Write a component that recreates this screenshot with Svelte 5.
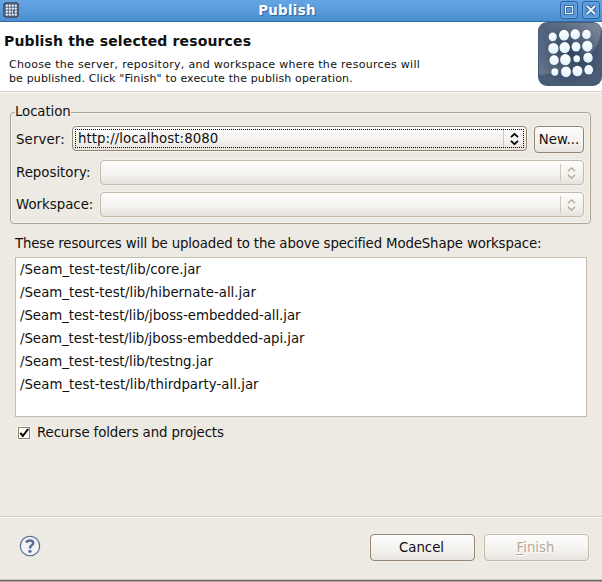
<script>
  const resources = [
    { name: 'core.jar', tracking: 0.02 },
    { name: 'hibernate-all.jar', tracking: 0 },
    { name: 'jboss-embedded-all.jar', tracking: -0.04 },
    { name: 'jboss-embedded-api.jar', tracking: -0.06 },
    { name: 'testng.jar', tracking: -0.03 },
    { name: 'thirdparty-all.jar', tracking: 0.02 }
  ];

  const dots = [
    [14.7, 14.8, 4.1], [26, 13.2, 5], [37.2, 12.4, 4.7], [48.5, 12.4, 4.3],
    [15.4, 26.4, 5.1], [26.7, 25.6, 5.2], [38, 24.8, 4.4], [49.3, 24.2, 5.1],
    [16.1, 38.2, 4.6], [27.4, 37.7, 5.3], [38.7, 36.8, 3.3], [50, 35.8, 4.7],
    [16.8, 50, 3.5], [28, 49.8, 5], [39.4, 49, 5], [50.7, 47.8, 4.4]
  ];
  const rows = [
    { label: 'Server:', value: 'http://localhost:8080', active: true },
    { label: 'Repository:', value: '', active: false },
    { label: 'Workspace:', value: '', active: false }
  ];
  let recurse = $state(true);
</script>

<main>
  <header class="titlebar">
    <svg class="appicon" width="16" height="16" viewBox="0 0 16 16">
      <rect width="16" height="16" rx="1.5" fill="#485a77" />
      {#each [4, 7, 10, 13] as y}
        {#each [4, 7, 10, 13] as x}
          <rect x={x - 1.4} y={y - 1.6} width={x === 10 && y === 10 ? 1.5 : 2.3} height="2.3" rx=".6" fill="#e3f1f7" />
        {/each}
      {/each}
      <path d="M0 .5h1M15 .5h1M0 15.5h1M15 15.5h1" stroke="#b9d5ef" />
    </svg>
    <h1>Publish</h1>
    <div class="controls">
      <button aria-label="Maximize">
        <svg width="18" height="18" viewBox="0 0 18 18"><rect x="5.5" y="5.5" width="7" height="7" fill="none" stroke="#2c6199" stroke-width="3" /><rect x="5.5" y="5.5" width="7" height="7" fill="none" stroke="#e6f0fa" stroke-width="1.2" /></svg>
      </button>
      <button aria-label="Close">
        <svg width="18" height="18" viewBox="0 0 18 18"><path d="M5 5l8 8M13 5l-8 8" stroke="#2c6199" stroke-width="4" /><path d="M5 5l8 8M13 5l-8 8" stroke="#eef4fb" stroke-width="2" /></svg>
      </button>
    </div>
  </header>

  <section class="banner">
    <div class="copy">
      <h2>Publish the selected resources</h2>
      <p>Choose the server, repository, and workspace where the resources will<br /><span>be published. Click "Finish" to execute the publish operation.</span></p>
    </div>
    <svg class="logo" width="64" height="64" viewBox="0 0 64 64">
      <defs>
        <radialGradient id="core"><stop offset="0" stop-color="#263b56" /><stop offset="1" stop-color="#4a5b76" /></radialGradient>
        <linearGradient id="gloss" x1="0" y1="1" x2="1" y2="0"><stop offset="0" stop-color="#fff" stop-opacity=".16" /><stop offset=".5" stop-color="#fff" stop-opacity=".04" /><stop offset="1" stop-color="#fff" stop-opacity=".28" /></linearGradient>
        <linearGradient id="dot" x2="0" y2="1"><stop offset="0" stop-color="#fff" /><stop offset="1" stop-color="#e1f2fa" /></linearGradient>
      </defs>
      <rect width="64" height="64" rx="9" fill="url(#core)" />
      <path d="M1 53V9Q1 1 9 1H55Q63 1 63 8Q60 46 1 53Z" fill="url(#gloss)" />
      {#each dots as [x, y, r]}
        <ellipse cx={x} cy={y} rx={r} ry={r * 1.07} fill="url(#dot)" />
      {/each}
    </svg>
  </section>

  <section class="content">
    <fieldset>
      <legend>Location</legend>
      {#each rows as row}
        <div class="row" class:active={row.active}>
          <span class="label">{row.label}</span>
          <div class="combo">
            <div class="focus">
              <span class="value">{row.value}</span>
              <i></i>
              <svg width="9" height="12" viewBox="0 0 9 12" fill="none" stroke={row.active ? '#000' : '#b3a899'} stroke-width={row.active ? 1.7 : 1.4}><path d="M1 4.2l3.5-3.4L8 4.2M1 7.8l3.5 3.4L8 7.8" /></svg>
            </div>
          </div>
          {#if row.active}<button class="btn new">New...</button>{/if}
        </div>
      {/each}
    </fieldset>

    <p class="caption">These resources will be uploaded to the above specified ModeShape workspace:</p>
    <ul>
      {#each resources as item}<li style:letter-spacing="{item.tracking}px">/Seam_test-test/lib/{item.name}</li>{/each}
    </ul>
    <button class="check" role="checkbox" aria-checked={recurse} onclick={() => (recurse = !recurse)}>
      <span class="box">{#if recurse}<svg width="10" height="10" viewBox="0 0 10 10"><path d="M1.3 4.9l2.5 3L9.2 1" fill="none" stroke="#000" stroke-width="2" /></svg>{/if}</span>
      <span>Recurse folders and projects</span>
    </button>
  </section>

  <footer>
    <svg class="help" width="22" height="22" viewBox="0 0 22 22">
      <circle cx="11" cy="11" r="9.7" fill="#f2f3f5" stroke="#4c6389" stroke-width="1.1" />
      <path d="M7.2 7.6Q8.2 5.5 11 5.5Q14.2 5.5 14.2 8.1Q14.2 9.6 12.4 10.5Q11 11.3 11 13.4" fill="none" stroke="#586d95" stroke-width="2.5" />
      <circle cx="11" cy="16.3" r="1.6" fill="#586d95" />
    </svg>
    <button class="btn">Cancel</button>
    <button class="btn disabled" disabled><u>F</u>inish</button>
  </footer>
</main>

<style>
  :global(body) { margin: 0; background: #edeae3; }
  main {
    box-sizing: border-box; width: 602px; height: 582px; overflow: hidden;
    display: flex; flex-direction: column; background: #edeae3; color: #101010;
    font: 13.33px/16px "DejaVu Sans", sans-serif;
    border-bottom: 1px solid #aaa39a;
    box-shadow: inset 0 -1px #716759, inset 0 -2px #d3cbc0;
  }
  h1, h2, p, ul { margin: 0; padding: 0; font-size: inherit; }
  button { font: inherit; color: inherit; padding: 0; }
  .titlebar {
    box-sizing: border-box; height: 22px; flex: none; display: grid; grid-template-columns: 44px 1fr 44px;
    border-bottom: 1px solid #326aa3; background: linear-gradient(#66a5e3, #4a8fd1); color: #fff;
  }
  .appicon { margin: 2px 0 0 3px; }
  h1 { text-align: center; line-height: 19px; padding-top: 1px; height: 20px; box-sizing: border-box; text-shadow: 1px 1px #2f659d; letter-spacing: .3px; padding-right: 27px; margin-left: -1px; }
  .controls { display: flex; gap: 4px; margin: 1px 0 0 2px; }
  .controls button { box-sizing: border-box; flex: none; width: 18px; height: 18px; border: 1px solid #2c6199; border-radius: 3px; background: #5899da; box-shadow: inset 0 0 0 1px #6aa8e4; }
  .controls svg { display: block; margin: -1px; }
  .banner { box-sizing: border-box; height: 70px; flex: none; display: flex; justify-content: space-between; background: #fff; border-bottom: 1px solid #d5cfc6; box-shadow: 0 1px #fbfaf8; position: relative; }
  .copy { padding: 11px 0 0 4px; white-space: nowrap; }
  h2 { font-size: 14px; letter-spacing: .14px; }
  .banner p { font-size: 11px; line-height: 14px; margin: 9px 0 0 5px; letter-spacing: .3px; }
  .banner p span { letter-spacing: .14px; }
  .logo { flex: none; }
  .content { flex: 1; display: flex; flex-direction: column; align-items: flex-start; padding: 11px 10px 0; }
  fieldset {
    box-sizing: border-box; width: 581px; height: 121px; margin: 0; padding: 5px 6px 0 5px; border: 1px solid #afa28f; border-radius: 4px;
    box-shadow: inset 0 0 0 1px #f7f5f1;
    display: flex; flex-direction: column;
  }
  legend { padding: 0; margin-left: -1px; line-height: 18px; letter-spacing: -.1px; }
  .row { display: flex; height: 25px; margin-bottom: 7px; align-items: flex-start; }
  .row.active { margin-bottom: 9px; }
  .label { width: 84px; flex: none; line-height: 25px; }
  .active .label { width: 56px; line-height: 27px; letter-spacing: .12px; }
  .combo {
    box-sizing: border-box; flex: 1; height: 25px; border: 1px solid #c5baaa; border-radius: 4px;
    background: linear-gradient(#fdfdfc, #f4f2ef 60%, #e6e1dc); padding: 2px; box-shadow: 0 0 0 1px #f3f0ec;
  }
  .active .combo { border-color: #93856f; }
  .focus { box-sizing: border-box; height: 19px; border: 1px dotted transparent; display: flex; align-items: center; padding: 0 4px 0 2px; }
  .active .focus { border-color: #000; }
  .value { flex: 1; line-height: 17px; letter-spacing: .06px; }
  .focus i { width: 1px; height: 17px; background: #d0c8bc; margin-right: 6px; }
  .btn {
    box-sizing: border-box; width: 105px; height: 27px; border: 1px solid #93856f; border-radius: 4px; padding-top: 1px;
    background: linear-gradient(#fdfdfc, #f4f2ef 60%, #e8e4df); box-shadow: 0 0 0 1px #f3f0ec;
  }
  .new { width: 50px; margin-left: 7px; flex: none; }
  .caption { margin: 12px 0 5px 5px; line-height: 16px; white-space: nowrap; letter-spacing: -.145px; }
  ul { box-sizing: border-box; width: 572px; height: 160px; margin-left: 5px; border: 1px solid #c4bbaa; background: #fff; list-style: none; }
  li { height: 23px; line-height: 24px; padding-left: 4px; }
  .check { margin: 8px 0 0 8px; border: 0; background: none; display: flex; align-items: center; gap: 7px; letter-spacing: -.11px; }
  .box { box-sizing: border-box; width: 12px; height: 12px; border: 1px solid #93856f; background: #fff; box-shadow: 0 0 0 1px #faf8f5; display: block; }
  .box svg { display: block; }
  footer { box-sizing: border-box; height: 65px; flex: none; display: flex; padding: 17px 13px 0 19px; gap: 9px; border-top: 1px solid #d6cebf; box-shadow: inset 0 1px #faf9f6; }
  .help { margin: 1px auto 0 0; }
  footer .btn { padding-right: 2px; }
  .disabled { color: #b6aa9b; border-color: #c5baaa; text-shadow: 1px 1px #fff; }
  u { text-underline-offset: 2px; }
</style>
